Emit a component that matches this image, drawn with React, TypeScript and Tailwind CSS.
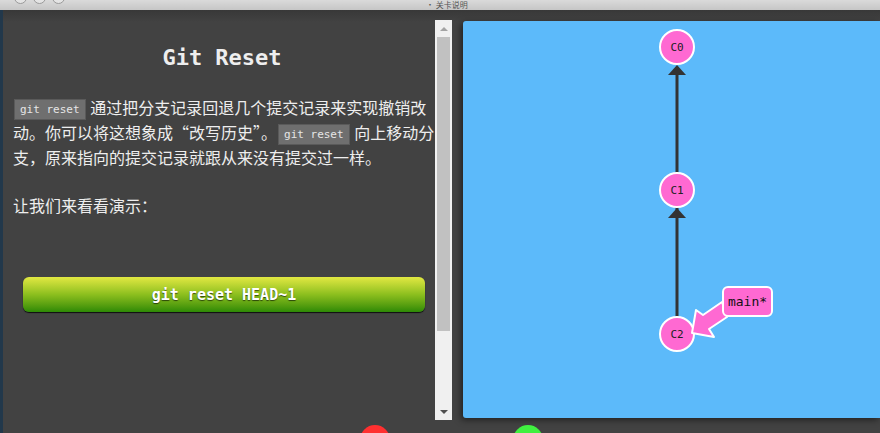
import React from "react";

const mono = "font-['DejaVu_Sans_Mono','Liberation_Mono',monospace]";
const cjk = "font-['Noto_Sans_CJK_SC','Noto_Sans',sans-serif]";

function Code({ children }: { children: React.ReactNode }) {
  return (
    <span
      className={`${mono} inline-block align-middle mx-[1px] h-[21px] px-[5px] leading-[19px] text-[11px] text-[#e6e6e6] bg-[#6f6f6f] border border-[#5a5a5a]`}
    >
      {children}
    </span>
  );
}

function Scrollbar() {
  return (
    <div className="w-[17px] h-[400px] bg-[#f0f0f0] flex flex-col items-center shrink-0">
      <div className="h-[17px] flex items-center justify-center">
        <div className="w-0 h-0 border-x-[4px] border-x-transparent border-b-[4px] border-b-[#a3a3a3]" />
      </div>
      <div className="w-[13px] h-[294px] bg-[#c1c1c1]" />
      <div className="flex-1" />
      <div className="h-[17px] flex items-center justify-center">
        <div className="w-0 h-0 border-x-[4px] border-x-transparent border-t-[4px] border-t-[#505050]" />
      </div>
    </div>
  );
}

function Commit({ x, y, label }: { x: number; y: number; label: string }) {
  return (
    <g>
      <circle cx={x} cy={y} r={17} fill="#ff69d2" stroke="#ffffff" strokeWidth={2} />
      <text
        x={x}
        y={y + 4}
        textAnchor="middle"
        fontSize={11}
        fontFamily="DejaVu Sans Mono, monospace"
        fill="#222"
      >
        {label}
      </text>
    </g>
  );
}

function Graph() {
  return (
    <svg width={417} height={397} className="block">
      {/* edges */}
      <line x1={214} y1={296} x2={214} y2={52} stroke="#333" strokeWidth={3} />
      <polygon points="214,44 205,54 223,54" fill="#333" />
      <polygon points="214,187 205,197 223,197" fill="#333" />
      <Commit x={214} y={26} label="C0" />
      <Commit x={214} y={169} label="C1" />
      <Commit x={214} y={313} label="C2" />
      {/* branch arrow */}
      <polygon
        points="229,312 233,289 240,294 259,281 264,296 246,308 251,316"
        fill="#ff69d2"
        stroke="#ffffff"
        strokeWidth={2}
        strokeLinejoin="round"
      />
      <rect x={260} y={266} width={49} height={29} rx={5} fill="#ff69d2" stroke="#ffffff" strokeWidth={2} />
      <text x={284.5} y={285} textAnchor="middle" fontSize={13} fontFamily="DejaVu Sans Mono, monospace" fill="#111">
        main*
      </text>
    </svg>
  );
}

export default function App() {
  return (
    <div className="w-[880px] h-[433px] overflow-hidden bg-[#424242] flex flex-col">
      {/* window title bar */}
      <div className="relative h-[10px] shrink-0 overflow-hidden bg-gradient-to-b from-[#dadada] to-[#c6c6c6]">
        <div className="flex gap-[6px] pl-[14px] -mt-[9px]">
          <div className="w-[13px] h-[13px] rounded-full border border-[#9a9a9a] bg-[#e4e4e4]" />
          <div className="w-[13px] h-[13px] rounded-full border border-[#9a9a9a] bg-[#e4e4e4]" />
          <div className="w-[13px] h-[13px] rounded-full border border-[#9a9a9a] bg-[#e4e4e4]" />
        </div>
        <div className={`${cjk} absolute left-[426px] top-0 text-[8px] leading-[9px] text-[#555]`}>• 关卡说明</div>
      </div>

      <div className="flex flex-1 min-h-0">
        <div className="w-[3px] bg-[#22384b] shrink-0" />

        <div className="flex flex-1 pt-[10px] bg-gradient-to-b from-[#383838] via-[#424242] to-[#424242] [background-size:100%_24px] [background-repeat:no-repeat] bg-[#424242]">
          {/* instructions */}
          <div className="w-[432px] shrink-0 pl-[10px] pr-[4px] text-[#eeeeee]">
            <h1 className={`${mono} mt-[23px] text-center text-[22px] leading-[30px] font-bold text-[#eeeeee]`}>
              Git Reset
            </h1>
            <div className={`${cjk} mt-[22px] text-[16px] leading-[25px] whitespace-nowrap`}>
              <div>
                <Code>git reset</Code> 通过把分支记录回退几个提交记录来实现撤销改
              </div>
              <div>
                动。你可以将这想象成“改写历史”。<Code>git reset</Code> 向上移动分
              </div>
              <div>支，原来指向的提交记录就跟从来没有提交过一样。</div>
              <div className="mt-[23px]">让我们来看看演示：</div>
            </div>
            <div className="pl-[10px] pr-[6px] mt-[59px]">
              <button
                className={`${mono} w-full h-[35px] rounded-[6px] bg-gradient-to-b from-[#e2e842] via-[#8cbf1e] to-[#2c8a06] text-white text-[15px] font-bold [text-shadow:0_1px_1px_rgba(0,0,0,0.6)] shadow-[0_1px_1px_rgba(0,0,0,0.8)]`}
              >
                git reset HEAD~1
              </button>
            </div>
          </div>

          <Scrollbar />

          {/* visualization */}
          <div className="ml-[11px] mt-[1px] w-[417px] h-[397px] shrink-0 bg-[#5cbafa] rounded-l-[3px] shadow-[-2px_2px_6px_rgba(0,0,0,0.5)]">
            <Graph />
          </div>
        </div>
      </div>

      {/* bottom controls, mostly out of view */}
      <div className="h-0 relative">
        <div className="absolute left-[360px] -top-[8px] w-[30px] h-[30px] rounded-full bg-[#ff3030]" />
        <div className="absolute left-[513px] -top-[8px] w-[30px] h-[30px] rounded-full bg-[#40f040]" />
      </div>
    </div>
  );
}
